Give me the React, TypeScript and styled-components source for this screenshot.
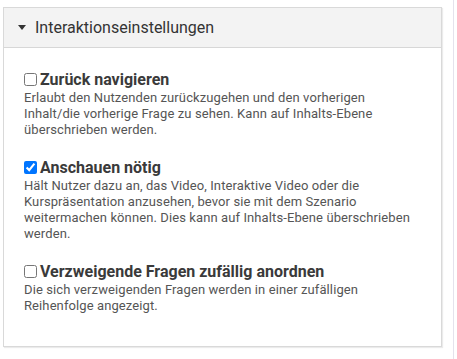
import styled, { createGlobalStyle } from "styled-components";

type Option = {
  id: string;
  title: string;
  text: string;
  checked: boolean;
};

const options: Option[] = [
  {
    id: "back",
    title: "Zurück navigieren",
    text:
      "Erlaubt den Nutzenden zurückzugehen und den vorherigen Inhalt/die vorherige Frage zu sehen. Kann auf Inhalts-Ebene überschrieben werden.",
    checked: false,
  },
  {
    id: "watch",
    title: "Anschauen nötig",
    text:
      "Hält Nutzer dazu an, das Video, Interaktive Video oder die Kurspräsentation anzusehen, bevor sie mit dem Szenario weitermachen können. Dies kann auf Inhalts-Ebene überschrieben werden.",
    checked: true,
  },
  {
    id: "shuffle",
    title: "Verzweigende Fragen zufällig anordnen",
    text:
      "Die sich verzweigenden Fragen werden in einer zufälligen Reihenfolge angezeigt.",
    checked: false,
  },
];

function App() {
  return (
    <>
      <GlobalStyle />
      <Page>
        <Panel>
          <PanelHeader>
            <Caret viewBox="0 0 8 5" aria-hidden>
              <path d="M0 0h8L4 5z" fill="currentColor" />
            </Caret>
            Interaktionseinstellungen
          </PanelHeader>
          <PanelBody>
            {options.map((opt) => (
              <Field key={opt.id}>
                <FieldLabel>
                  <Checkbox type="checkbox" defaultChecked={opt.checked} />
                  {opt.title}
                </FieldLabel>
                <Description>{opt.text}</Description>
              </Field>
            ))}
          </PanelBody>
        </Panel>
      </Page>
    </>
  );
}

const GlobalStyle = createGlobalStyle`
  html, body {
    margin: 0;
    padding: 0;
    background: #fff;
  }
  body {
    font-family: Roboto, "Liberation Sans", sans-serif;
    color: #333;
  }
`;

const Page = styled.div`
  width: 454px;
  height: 359px;
  border-right: 1px solid #e4e2ec;
  padding: 7px 0 0 3px;
  box-sizing: border-box;
`;

const Panel = styled.section`
  width: 439px;
  box-sizing: border-box;
  border: 1px solid #d9d9d9;
  box-shadow: 1px 1px 1px rgba(0, 0, 0, 0.08);
  background: #fff;
`;

const PanelHeader = styled.div`
  display: flex;
  align-items: center;
  gap: 9px;
  height: 39px;
  padding: 0 14px;
  background: #f3f3f3;
  border-bottom: 1px solid #d7d7d7;
  font-size: 16px;
  color: #333;
`;

const Caret = styled.svg`
  width: 8px;
  height: 5px;
  color: #333;
`;

const PanelBody = styled.div`
  display: flex;
  flex-direction: column;
  gap: 18px;
  padding: 20px 20px 32px;
`;

const Field = styled.div`
  display: flex;
  flex-direction: column;
`;

const FieldLabel = styled.label`
  display: flex;
  align-items: center;
  height: 22px;
  font-size: 16px;
  font-weight: 700;
  color: #3a3a3a;
`;

const Checkbox = styled.input`
  width: 13px;
  height: 13px;
  margin: 0 3px 0 0;
`;

const Description = styled.div`
  font-size: 13px;
  line-height: 16px;
  color: #555;
  letter-spacing: 0.1px;
`;

export default App;
